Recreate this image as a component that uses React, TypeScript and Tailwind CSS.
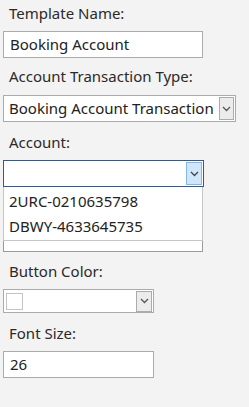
const font = { fontFamily: '"Noto Sans", "Open Sans", sans-serif' };

function Chevron({ color = "#555" }: { color?: string }) {
  return (
    <svg width="9" height="6" viewBox="0 0 9 6" fill="none">
      <polyline points="1,1 4.5,4.5 8,1" stroke={color} strokeWidth="1.3" />
    </svg>
  );
}

function Label({ text, className }: { text: string; className?: string }) {
  return (
    <div className={"h-[20px] pl-[6px] text-[15px] leading-[20px] text-[#2a2a2a] " + (className ?? "")}>
      {text}
    </div>
  );
}

export default function App() {
  return (
    <div className="h-[407px] w-full bg-[#f3f3f3] px-[3px] pt-[3px]" style={font}>
      <Label text="Template Name:" />
      <div className="mt-[8px] flex h-[27px] w-[200px] items-center border border-[#ababab] bg-white pl-[6px] text-[15px] text-[#222]">
        Booking Account
      </div>

      <Label text="Account Transaction Type:" className="mt-[8px]" />
      <div className="mt-[9px] flex h-[27px] w-[233px] items-center justify-between border border-[#ababab] bg-white pl-[5px] pr-px text-[15px] text-[#222]">
        <span className="whitespace-nowrap">Booking Account Transaction</span>
        <div className="flex h-[23px] w-[15px] items-center justify-center border border-[#ababab] bg-[#ececec]">
          <Chevron />
        </div>
      </div>

      <Label text="Account:" className="mt-[10px]" />
      <div className="relative mt-[8px]">
        <div className="flex h-[27px] w-[201px] items-center justify-end border border-[#2b5a9e] bg-white pr-px">
          <div className="flex h-[23px] w-[16px] items-center justify-center border border-[#84b8ea] bg-[#cfe6fb]">
            <Chevron color="#444" />
          </div>
        </div>
        <div className="mt-[37px] h-[28px] w-[200px] border border-[#9a9a9a] bg-white" />
        <div className="absolute left-0 top-[27px] h-[54px] w-[200px] border border-t-0 border-[#c6c6c6] bg-white pt-[2px] text-[15px] text-[#222]">
          <div className="flex h-[25px] items-center pl-[5px]">2URC-0210635798</div>
          <div className="flex h-[25px] items-center pl-[5px]">DBWY-4633645735</div>
        </div>
      </div>

      <Label text="Button Color:" className="mt-[9px]" />
      <div className="mt-[8px] flex h-[24px] w-[151px] items-center justify-between border border-[#ababab] bg-white pl-[2px] pr-px">
        <div className="h-[17px] w-[17px] border border-[#c4c4c4] bg-white" />
        <div className="flex h-[21px] w-[16px] items-center justify-center border border-[#ababab] bg-[#ececec]">
          <Chevron />
        </div>
      </div>

      <Label text="Font Size:" className="mt-[10px]" />
      <div className="mt-[8px] flex h-[27px] w-[151px] items-center border border-[#ababab] bg-white pl-[6px] text-[15px] text-[#222]">
        26
      </div>
    </div>
  );
}
